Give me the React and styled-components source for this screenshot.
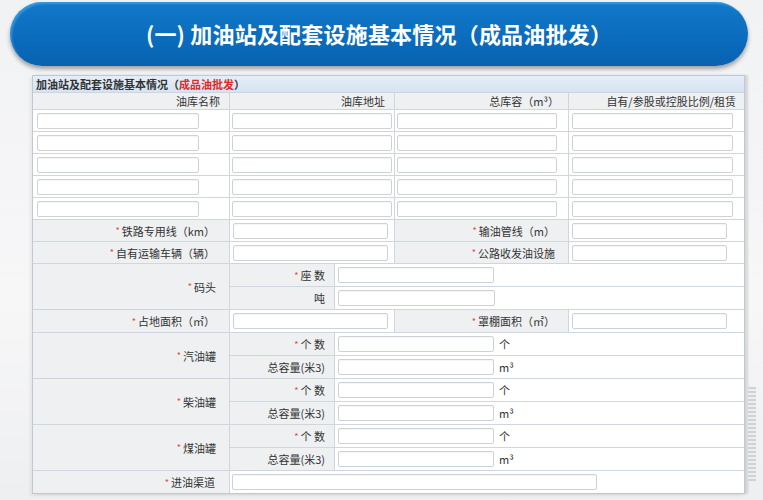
import React from "react";
import styled, { createGlobalStyle } from "styled-components";

const GlobalStyle = createGlobalStyle`
  *, *::before, *::after {
    box-sizing: border-box;
  }
  body {
    margin: 0;
    background: linear-gradient(180deg, #f1f2f4 0%, #f7f7f8 60%, #eeeff1 100%);
    font-family: "Noto Sans CJK SC", "Noto Sans", sans-serif;
  }
`;

const Page = styled.div`
  width: 763px;
  height: 500px;
  padding-top: 2px;
  overflow: hidden;
`;

const Banner = styled.div`
  width: 738px;
  height: 64px;
  margin-left: 10px;
  border-radius: 32px;
  background: linear-gradient(180deg, #1279ca 0%, #0b6cbd 55%, #0862b0 100%);
  box-shadow: 0 3px 4px rgba(0, 0, 0, 0.35), inset 2px 2px 2px rgba(120, 210, 255, 0.35);
  display: flex;
  align-items: center;
  justify-content: center;
  color: #fff;
  font-size: 22px;
  font-weight: 700;
  letter-spacing: 0.2px;
  padding-bottom: 2px;
`;

const Body = styled.div`
  display: flex;
  margin-top: 9px;
  margin-left: 32px;
`;

const Sheet = styled.div`
  width: 713px;
  border: 1px solid #bfc9d3;
  background: #fff;
  box-shadow: 3px 0 2px rgba(0, 0, 0, 0.12), -2px 2px 3px rgba(0, 0, 0, 0.06);
  font-size: 11px;
  color: #333;
`;

const PaperEdge = styled.div`
  align-self: flex-end;
  width: 8px;
  height: 95px;
  margin: 0 0 12px 3px;
  background: repeating-linear-gradient(180deg, #cfd3d6 0 2px, #eceeef 2px 4px);
  border-radius: 1px;
`;

const TitleRow = styled.div`
  height: 17px;
  padding-left: 3px;
  display: flex;
  align-items: center;
  font-weight: 700;
  background: linear-gradient(180deg, #e6eef8 0%, #d6e3f2 100%);
  border-bottom: 1px solid #cdd6df;
`;

const Red = styled.span`
  color: #e02a2a;
`;

const Row = styled.div`
  display: grid;
  grid-template-columns: ${(p) => p.$cols};
  height: ${(p) => p.$h}px;
  border-bottom: ${(p) => (p.$last ? "none" : "1px solid #cfd6dd")};
`;

const Cell = styled.div`
  display: flex;
  align-items: center;
  justify-content: ${(p) => (p.$right ? "flex-end" : "flex-start")};
  padding: ${(p) => (p.$right ? `0 ${p.$pad ?? 13}px 0 0` : `0 0 0 ${p.$pad ?? 3}px`)};
  background: ${(p) => (p.$gray ? "#eef0f2" : "#fff")};
  border-right: ${(p) => (p.$open ? "none" : "1px solid #cfd6dd")};
  white-space: nowrap;
  min-width: 0;
`;

const Group = styled.div`
  display: grid;
  grid-template-columns: 197px 1fr;
  border-bottom: 1px solid #cfd6dd;
`;

const GroupLabel = styled(Cell)`
  justify-content: flex-end;
  padding-right: 13px;
`;

const SubRows = styled.div`
  display: flex;
  flex-direction: column;
`;

const Input = styled.input`
  width: ${(p) => p.$w}px;
  height: 16px;
  margin: 0;
  border: 1px solid #cdd2d7;
  border-radius: 2px;
  background: #fff;
  box-shadow: inset 0 1px 1px rgba(0, 0, 0, 0.04);
  outline: none;
`;

const Unit = styled.span`
  margin-left: 5px;
  font-size: 11px;
  color: #333;
`;

const Star = styled.span`
  color: #e04848;
  font-size: 9px;
  margin-right: 2px;
`;

const FOUR = "197px 165px 174px 1fr";

const Label = ({ req, children }) => (
  <>
    {req && <Star>*</Star>}
    {children}
  </>
);

const PairRow = ({ left, right, h = 22 }) => (
  <Row $cols={FOUR} $h={h}>
    <Cell $gray $right $pad={14}>
      <Label req>{left}</Label>
    </Cell>
    <Cell>
      <Input $w={155} />
    </Cell>
    <Cell $gray $right $pad={13}>
      <Label req>{right}</Label>
    </Cell>
    <Cell $open $pad={3}>
      <Input $w={155} />
    </Cell>
  </Row>
);

const SubRow = ({ label, req, unit, last, w = 156 }) => (
  <Row $cols="105px 1fr" $h={last ? 22 : 23} $last={last}>
    <Cell $gray $right $pad={9}>
      <Label req={req}>{label}</Label>
    </Cell>
    <Cell $open $pad={3}>
      <Input $w={w} />
      {unit && <Unit>{unit}</Unit>}
    </Cell>
  </Row>
);

const TankGroup = ({ name }) => (
  <Group>
    <GroupLabel $gray>
      <Label req>{name}</Label>
    </GroupLabel>
    <SubRows>
      <SubRow label="个 数" req unit="个" />
      <SubRow label="总容量(米3)" unit="m³" last />
    </SubRows>
  </Group>
);

const headers = ["油库名称", "油库地址", "总库容（m³）", "自有/参股或控股比例/租赁"];

export default function App() {
  return (
    <Page>
      <GlobalStyle />
      <Banner>(一) 加油站及配套设施基本情况（成品油批发）</Banner>
      <Body>
        <Sheet>
          <TitleRow>
            加油站及配套设施基本情况（<Red>成品油批发</Red>）
          </TitleRow>
          <Row $cols={FOUR} $h={17}>
            {headers.map((h, i) => (
              <Cell key={h} $gray $right $pad={i === 3 ? 8 : 9} $open={i === 3}>
                {h}
              </Cell>
            ))}
          </Row>
          {[0, 1, 2, 3, 4].map((r) => (
            <Row key={r} $cols={FOUR} $h={22}>
              <Cell $pad={4}>
                <Input $w={162} />
              </Cell>
              <Cell $pad={2}>
                <Input $w={160} />
              </Cell>
              <Cell $pad={2}>
                <Input $w={160} />
              </Cell>
              <Cell $open $pad={3}>
                <Input $w={161} />
              </Cell>
            </Row>
          ))}
          <PairRow left="铁路专用线（km）" right="输油管线（m）" />
          <PairRow left="自有运输车辆（辆）" right="公路收发油设施" />
          <Group>
            <GroupLabel $gray>
              <Label req>码头</Label>
            </GroupLabel>
            <SubRows>
              <SubRow label="座 数" req />
              <SubRow label="吨" last w={157} />
            </SubRows>
          </Group>
          <PairRow left="占地面积（㎡）" right="罩棚面积（㎡）" h={23} />
          <TankGroup name="汽油罐" />
          <TankGroup name="柴油罐" />
          <TankGroup name="煤油罐" />
          <Row $cols="197px 1fr" $h={22} $last>
            <Cell $gray $right $pad={14}>
              <Label req>进油渠道</Label>
            </Cell>
            <Cell $open $pad={2}>
              <Input $w={365} />
            </Cell>
          </Row>
        </Sheet>
        <PaperEdge />
      </Body>
    </Page>
  );
}
